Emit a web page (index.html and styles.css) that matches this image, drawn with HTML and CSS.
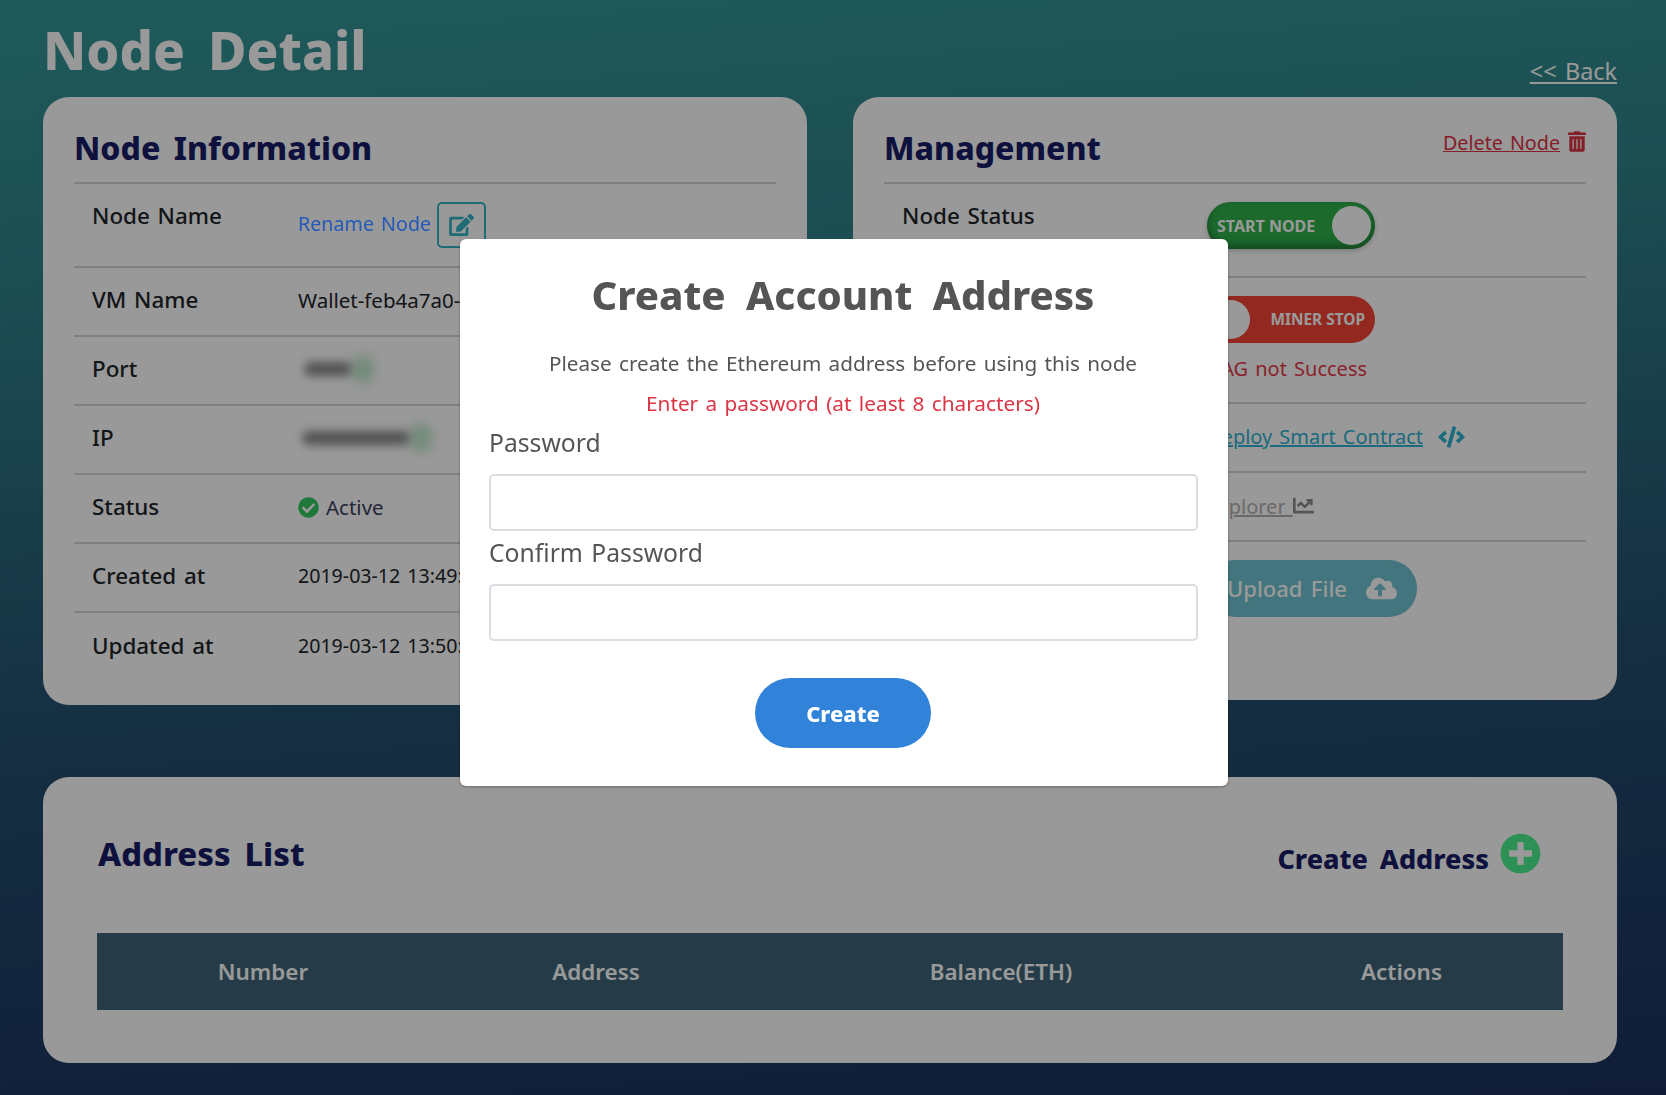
FILE: index.html
```html
<!DOCTYPE html>
<html lang="en">
<head>
<meta charset="utf-8">
<title>Node Detail</title>
<link rel="stylesheet" href="styles.css">
</head>
<body>
<main class="page">
  <header class="page-head">
    <h1 class="page-title">Node Detail</h1>
    <a class="back" href="#">&lt;&lt; Back</a>
  </header>

  <section class="cards">
    <article class="card info">
      <div class="card-head"><h2>Node Information</h2></div>
      <div class="row row-name">
        <div class="label">Node Name</div>
        <div class="value">
          <a class="rename" href="#">Rename Node</a>
          <button class="edit-btn" type="button"><svg class="ico-edit" viewBox="0 0 576 512"><path d="M402.6 83.2l90.2 90.2c3.8 3.8 3.8 10 0 13.8L274.4 405.6l-92.8 10.3c-12.4 1.4-22.9-9.1-21.5-21.5l10.3-92.8L388.8 83.2c3.8-3.8 10-3.8 13.8 0zm162-22.9l-48.8-48.8c-15.2-15.2-39.9-15.2-55.2 0l-35.4 35.4c-3.8 3.8-3.8 10 0 13.8l90.2 90.2c3.8 3.8 10 3.8 13.8 0l35.4-35.4c15.2-15.3 15.2-40 0-55.2zM384 346.2V448H64V128h229.8c3.2 0 6.2-1.3 8.5-3.5l40-40c7.6-7.6 2.2-20.5-8.5-20.5H48C21.5 64 0 85.5 0 112v352c0 26.5 21.5 48 48 48h352c26.5 0 48-21.5 48-48V306.2c0-10.7-12.9-16-20.5-8.5l-40 40c-2.2 2.3-3.5 5.3-3.5 8.5z"/></svg></button>
        </div>
      </div>
      <div class="row"><div class="label">VM Name</div><div class="value">Wallet-feb4a7a0-</div></div>
      <div class="row"><div class="label">Port</div><div class="value"><span class="blur blur-port"></span><span class="blur-green"></span></div></div>
      <div class="row"><div class="label">IP</div><div class="value"><span class="blur blur-ip"></span><span class="blur-green"></span></div></div>
      <div class="row"><div class="label">Status</div><div class="value status"><svg class="ico-check" viewBox="0 0 512 512"><path d="M504 256c0 136.967-111.033 248-248 248S8 392.967 8 256 119.033 8 256 8s248 111.033 248 248zM227.314 387.314l184-184c6.248-6.248 6.248-16.379 0-22.627l-22.627-22.627c-6.248-6.249-16.379-6.249-22.628 0L216 308.118l-70.059-70.059c-6.248-6.248-16.379-6.248-22.628 0l-22.627 22.627c-6.248 6.248-6.248 16.379 0 22.627l104 104c6.249 6.249 16.379 6.249 22.628.001z"/></svg>Active</div></div>
      <div class="row"><div class="label">Created at</div><div class="value date">2019-03-12 13:49:</div></div>
      <div class="row last"><div class="label">Updated at</div><div class="value date">2019-03-12 13:50:</div></div>
    </article>

    <article class="card mgmt">
      <div class="card-head head-between">
        <h2>Management</h2>
        <a class="delete" href="#"><span class="delete-text">Delete Node</span><svg class="ico-trash" viewBox="0 0 448 512"><path d="M32 464a48 48 0 0 0 48 48h288a48 48 0 0 0 48-48V128H32zm272-256a16 16 0 0 1 32 0v224a16 16 0 0 1-32 0zm-96 0a16 16 0 0 1 32 0v224a16 16 0 0 1-32 0zm-96 0a16 16 0 0 1 32 0v224a16 16 0 0 1-32 0zM432 32H312l-9.4-18.7A24 24 0 0 0 281.1 0H166.8a23.72 23.72 0 0 0-21.4 13.3L136 32H16A16 16 0 0 0 0 48v32a16 16 0 0 0 16 16h416a16 16 0 0 0 16-16V48a16 16 0 0 0-16-16z"/></svg></a>
      </div>
      <div class="row m-status">
        <div class="label m-label">Node Status</div>
        <div class="toggle toggle-on"><span>START NODE</span><i class="knob"></i></div>
      </div>
      <div class="row m-miner">
        <div class="label m-label"></div>
        <div class="miner-cell">
          <div class="toggle toggle-off"><i class="knob"></i><span>MINER STOP</span></div>
          <div class="dag-error">DAG not Success</div>
        </div>
      </div>
      <div class="row">
        <div class="label m-label"></div>
        <div class="value deploy-cell"><a class="deploy" href="#">Deploy Smart Contract</a><svg class="ico-code" viewBox="0 0 640 512"><path d="M278.9 511.5l-61-17.7c-6.4-1.8-10-8.5-8.2-14.9L346.2 8.7c1.8-6.4 8.5-10 14.9-8.2l61 17.7c6.4 1.8 10 8.5 8.2 14.9L293.8 503.3c-1.9 6.4-8.5 10.1-14.9 8.2zm-114-112.2l43.5-46.4c4.6-4.9 4.3-12.7-.8-17.2L117 256l90.6-79.7c5.1-4.5 5.5-12.3.8-17.2l-43.5-46.4c-4.5-4.8-12.1-5.1-17-.5L3.8 247.2c-5.1 4.7-5.1 12.8 0 17.5l144.1 135.1c4.9 4.6 12.5 4.4 17-.5zm327.2.6l144.1-135.1c5.1-4.7 5.1-12.8 0-17.5L492.1 112.1c-4.8-4.5-12.4-4.3-17 .5L431.6 159c-4.6 4.9-4.3 12.7.8 17.2L523 256l-90.6 79.7c-5.1 4.5-5.5 12.3-.8 17.2l43.5 46.4c4.5 4.9 12.1 5.1 17 .6z"/></svg></div>
      </div>
      <div class="row">
        <div class="label m-label"></div>
        <div class="value"><a class="explorer" href="#">Explorer <svg class="ico-chart" viewBox="0 0 512 512"><path d="M496 384H64V80c0-8.84-7.16-16-16-16H16C7.16 64 0 71.16 0 80v336c0 17.67 14.33 32 32 32h464c8.84 0 16-7.16 16-16v-32c0-8.84-7.16-16-16-16zM464 96H345.94c-21.38 0-32.09 25.85-16.97 40.97l32.4 32.4L288 242.75l-73.37-73.37c-12.5-12.5-32.76-12.5-45.25 0l-68.69 68.69c-6.25 6.25-6.25 16.38 0 22.63l22.62 22.62c6.25 6.25 16.38 6.25 22.63 0L192 237.25l73.37 73.37c12.5 12.5 32.76 12.5 45.25 0l96-96 32.4 32.4c15.12 15.12 40.97 4.41 40.97-16.97V112c0-8.84-7.16-16-16-16z"/></svg></a></div>
      </div>
      <div class="row last m-upload">
        <div class="label m-label"></div>
        <button class="upload" type="button">Upload File<svg class="ico-cloud" viewBox="0 0 640 512"><path d="M537.6 226.6c4.1-10.7 6.4-22.4 6.4-34.6 0-53-43-96-96-96-19.7 0-38.1 6-53.3 16.2C367 64.2 315.3 32 256 32c-88.4 0-160 71.6-160 160 0 2.7.1 5.4.2 8.1C40.2 219.8 0 273.2 0 336c0 79.5 64.5 144 144 144h368c70.7 0 128-57.3 128-128 0-61.9-44-113.6-102.4-125.4zM393.4 288H328v112c0 8.8-7.2 16-16 16h-48c-8.8 0-16-7.2-16-16V288h-65.4c-14.3 0-21.4-17.2-11.3-27.3l105.4-105.4c6.2-6.2 16.4-6.2 22.6 0l105.4 105.4c10.1 10.1 2.9 27.3-11.3 27.3z"/></svg></button>
      </div>
    </article>
  </section>

  <section class="card list">
    <div class="list-head">
      <h2>Address List</h2>
      <a class="create-address" href="#">Create Address<svg class="ico-plus" viewBox="0 0 512 512"><path d="M256 8C119 8 8 119 8 256s111 248 248 248 248-111 248-248S393 8 256 8zm144 276c0 6.6-5.4 12-12 12h-92v92c0 6.6-5.4 12-12 12h-56c-6.6 0-12-5.4-12-12v-92h-92c-6.6 0-12-5.4-12-12v-56c0-6.6 5.4-12 12-12h92v-92c0-6.6 5.4-12 12-12h56c6.6 0 12 5.4 12 12v92h92c6.6 0 12 5.4 12 12v56z"/></svg></a>
    </div>
    <div class="thead">
      <div>Number</div><div>Address</div><div>Balance(ETH)</div><div>Actions</div>
    </div>
  </section>
</main>

<div class="backdrop"></div>
<form class="modal">
  <h3 class="modal-title">Create Account Address</h3>
  <p class="modal-text">Please create the Ethereum address before using this node</p>
  <p class="modal-error">Enter a password (at least 8 characters)</p>
  <label class="field-label" for="pw">Password</label>
  <input class="field" id="pw" type="password">
  <label class="field-label" for="pw2">Confirm Password</label>
  <input class="field" id="pw2" type="password">
  <button class="create-btn" type="button">Create</button>
</form>
</body>
</html>
```

FILE: styles.css
```css
* { box-sizing: border-box; }
html, body { margin: 0; height: 100%; }
body {
  height: 1095px;
  overflow: hidden;
  font-family: "Noto Sans", "Open Sans", sans-serif;
  word-spacing: .12em;
  color: #212529;
  background: linear-gradient(176deg, #349797 0%, #2f8088 25%, #24506f 60%, #1b305d 100%);
}
a { color: inherit; }
h1, h2, h3, p { margin: 0; }

.page { padding: 0 49px 0 43px; }
.page-head { height: 97px; display: flex; justify-content: space-between; align-items: flex-end; }
.page-title { font-size: 52.6px; line-height: 70px; margin-bottom: 12px; font-weight: 800; color: #fff; word-spacing: .18em; }
.back { font-size: 23.4px; line-height: 30px; margin-bottom: 11px; color: #fff; word-spacing: .1em; }

.cards { display: grid; grid-template-columns: 764px 764px; gap: 46px; align-items: start; }
.card { background: #fff; border-radius: 26px; padding: 0 31px; }
.info { height: 608px; }
.mgmt { height: 603px; }

.card-head { height: 87px; padding-top: 29px; border-bottom: 2px solid #d6d6d6; }
.card-head h2 { font-size: 32px; line-height: 44px; color: #181d66; font-weight: 800; word-spacing: .16em; }
.head-between { display: flex; justify-content: space-between; align-items: flex-start; }
.delete { display: flex; align-items: center; gap: 8px; margin-top: 2px; color: #dc3545; font-size: 19.7px; line-height: 30px; }
.ico-trash { width: 18px; height: 21px; fill: #dc3545; margin-top: -3px; }

.row { height: 69px; padding: 0 18px 3px; display: flex; align-items: center; border-bottom: 2px solid #d6d6d6; }
.row.last { border-bottom: 0; }
.label { width: 206px; flex: none; font-size: 22.4px; font-weight: 500; line-height: 32px; color: #212529; }
.value { display: flex; align-items: center; font-size: 20.5px; line-height: 30px; white-space: nowrap; color: #212529; }
.date { font-size: 19.6px; }

.row-name { height: 84px; align-items: flex-start; padding-top: 16px; }
.row-name .value { margin-top: 2px; }
.rename { position: relative; z-index: 1; margin-top: -2px; text-decoration: none; color: #2459b8; font-size: 19.7px; }
.edit-btn { width: 49px; height: 46px; margin-left: 6px; padding: 0; background: none; border: 2px solid #33b4c4; border-radius: 5px; display: flex; align-items: center; justify-content: center; }
.ico-edit { width: 25px; height: 22px; fill: #33b4c4; }

.blur { display: block; height: 14px; border-radius: 7px; background: #4a4a4a; opacity: .65; filter: blur(5px); }
.blur-port { width: 48px; margin-left: 6px; }
.blur-ip { width: 108px; margin-left: 4px; }
.blur-green { display: block; width: 22px; height: 28px; border-radius: 10px; background: #5fc47a; opacity: .4; filter: blur(6px); }

.status { color: #3b3f5e; }
.ico-check { width: 21px; height: 21px; margin-right: 7px; fill: #32c95f; }

.m-label { width: 305px; }
.m-status { height: 94px; align-items: flex-start; padding-top: 16px; }
.toggle { width: 168px; height: 47px; border-radius: 24px; padding: 0 4px; color: #fff; font-size: 16px; font-weight: 700; word-spacing: 0; display: flex; align-items: center; }
.toggle-on { background: #2fb24c; justify-content: space-between; padding-left: 10px; margin-top: 2px; box-shadow: inset 0 -4px 9px rgba(0,0,0,.35), 0 2px 5px rgba(0,0,0,.2); }
.toggle-off { background: #f44336; justify-content: space-between; padding-right: 10px; font-size: 15.4px; }
.knob { display: block; width: 39px; height: 39px; border-radius: 50%; background: #fff; }
.m-miner { height: 126px; align-items: flex-start; padding-top: 18px; }
.dag-error { font-size: 20px; line-height: 30px; color: #e5394a; margin-top: 11px; }
.deploy-cell { margin-top: 2px; }
.deploy { color: #2fb1d1; font-size: 20px; line-height: 30px; }
.ico-code { width: 27px; height: 24px; margin-left: 15px; fill: #2fb1d1; }
.explorer { color: #b0b0b0; font-size: 20px; line-height: 30px; margin-top: 4px; }
.ico-chart { width: 21px; height: 21px; fill: #8e8e8e; vertical-align: -2px; }
.m-upload { height: 74px; padding: 18px 18px 0; }
.upload { width: 210px; height: 57px; border: 0; border-radius: 28px; background: #71c3d2; color: #fff; font: 500 22px "Noto Sans", sans-serif; word-spacing: .12em; display: flex; align-items: center; justify-content: center; gap: 17px; padding-bottom: 1px; }
.ico-cloud { width: 31px; height: 25px; fill: #fff; margin-left: 2px; }

.list { margin-top: 72px; height: 286px; padding: 0 54px; }
.list-head { height: 156px; display: flex; justify-content: space-between; align-items: flex-start; padding: 55px 22px 0 1px; }
.list-head h2 { font-size: 32.8px; line-height: 44px; color: #181d66; font-weight: 800; word-spacing: .16em; }
.create-address { display: flex; align-items: center; gap: 11px; font-size: 27px; font-weight: 800; color: #181d66; text-decoration: none; margin-top: 8px; word-spacing: .18em; }
.ico-plus { width: 41px; height: 41px; fill: #4bf08e; margin-top: -10px; }
.thead { display: grid; grid-template-columns: 332px 334px 476px 325px; height: 77px; align-items: center; background: #3e6579; color: #fff; font-size: 22.4px; font-weight: 600; text-align: center; word-spacing: 0; }

.backdrop { position: fixed; inset: 0; background: rgba(0,0,0,.4); }
.modal { position: fixed; z-index: 2; left: 460px; top: 239px; width: 768px; height: 547px; background: #fff; border-radius: 6px; padding: 0 31px 0 29px; text-align: center; box-shadow: 0 1px 3px rgba(0,0,0,.3); }
.modal-title { font-size: 40px; line-height: 52px; color: #555; font-weight: 800; margin-top: 30px; word-spacing: .25em; }
.modal-text { font-size: 20.7px; line-height: 30px; color: #555; margin-top: 27px; }
.modal-error { font-size: 20.8px; line-height: 30px; color: #dc3545; margin-top: 10px; }
.field-label { display: block; text-align: left; font-size: 24.7px; line-height: 34px; color: #555; margin-top: 8px; margin-bottom: 14px; }
.field { display: block; width: 709px; height: 57px; background: #fff; border: 2px solid #dadee3; border-radius: 5px; }
.field + .field-label { margin-top: 5px; margin-bottom: 14px; }
.create-btn { display: block; margin: 37px auto 0; width: 176px; height: 70px; border: 0; border-radius: 35px; background: #3182d9; color: #fff; font: 800 22px "Noto Sans", sans-serif; }
```
